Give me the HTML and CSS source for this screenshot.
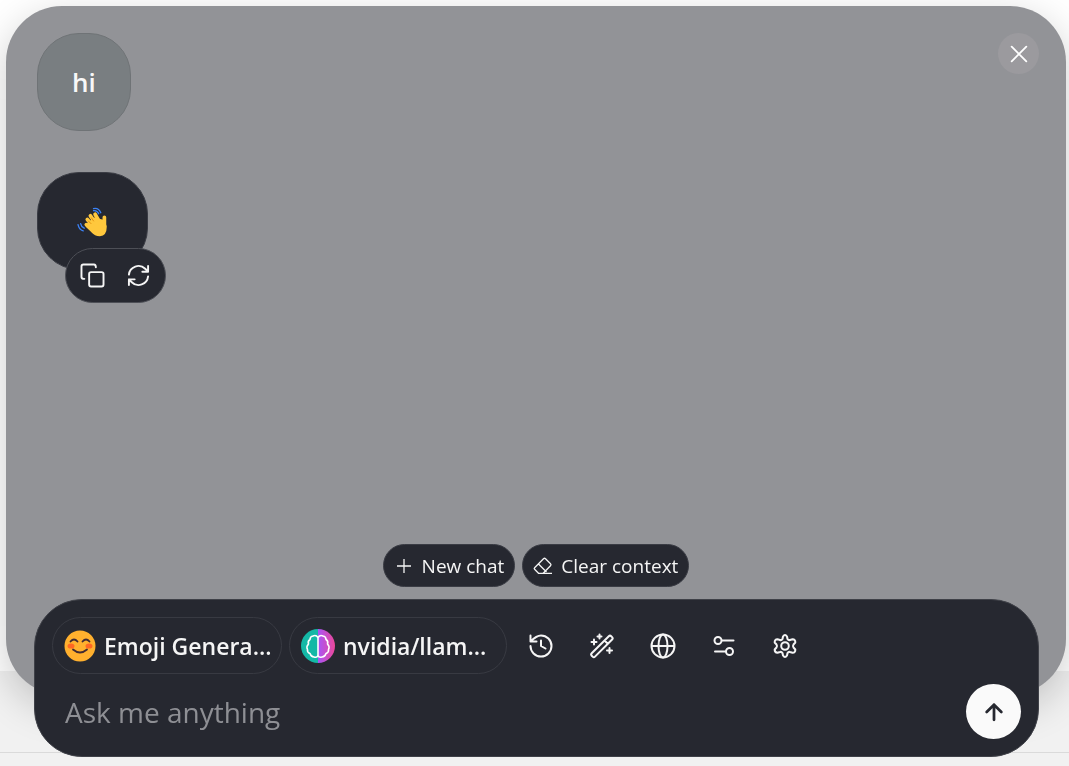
FILE: index.html
```html
<!DOCTYPE html>
<html lang="en">

<head>
    <meta charset="utf-8">
    <title>Chat</title>
    <meta name="viewport" content="width=device-width, initial-scale=1.0">
    <link rel="stylesheet" href="styles.css">
</head>

<body>
    <div id="page-footer"></div>
    <div id="chat">
        <main id="panel">
            <div id="messages">
                <div class="message user">hi</div>
                <div class="message bot">
                    <svg class="wave" viewBox="0 0 30 30" role="img" aria-label="waving hand">
                        <g fill="none" stroke="#3b82f6" stroke-width="1.3" stroke-linecap="round">
                            <path d="M16 2.500Q21 1.500 23 6.500M16 4.500Q19.500 4 21 7.500M1 18Q2 23 6 24M3.500 17Q4 20 7 21.500" />
                        </g>
                        <g stroke="#ffc83d" stroke-width="3.600" stroke-linecap="round" stroke-linejoin="round" fill="#ffc83d">
                            <path d="M10 19L17 13L25 15L27 20Q27 27 22 27.500Q18 27.500 15 24Z" />
                            <path d="M15 23L9 18M16 20L10 13M19 18L13 9.500M22 16L17.500 8M26.500 19L26.500 11" />
                        </g>
                        <path d="M13.500 17L11 14.500M16 14.500L14 11.500" fill="none" stroke="#d67d00" stroke-width="0.700" stroke-linecap="round" />
                    </svg>
                    <div class="message-tools">
                        <button aria-label="Copy">
                            <svg class="icon" viewBox="0 0 24 24"><rect x="8.500" y="8.500" width="15" height="15" rx="2" /><path d="M3.500 15.500c-1.600 0-3-.9-3-2V2.500c0-1.100.9-2 2-2h11c1.100 0 2 .9 2 3" /></svg>
                        </button>
                        <button aria-label="Regenerate">
                            <svg class="icon" viewBox="0 0 24 24"><path d="M2 11a10 10 0 0 1 17-6l3 3M22 2v6h-6M22 13a10 10 0 0 1-17 6l-3-3M2 22v-6h6" /></svg>
                        </button>
                    </div>
                </div>
            </div>
            <button id="close" aria-label="Close">
                <svg class="icon" viewBox="0 0 24 24"><path d="M4 4l16 16M20 4L4 20" /></svg>
            </button>
            <div id="actions">
                <button class="action">
                    <svg viewBox="0 0 20 20"><path d="M10 3v14M3 10h14" /></svg>
                    New chat
                </button>
                <button class="action">
                    <svg viewBox="0 0 20 20"><path d="M5.500 17.300L1.600 13.300Q.8 12.500 1.600 11.700L10.500 2.800Q11.500 1.800 12.500 2.800L17.500 7.800Q18.500 8.800 17.500 9.800L10.200 17.300ZM5.500 8L13.500 16M10 17.300H19" /></svg>
                    Clear context
                </button>
            </div>
        </main>

        <form id="composer">
            <div id="tools">
                <button type="button" class="picker">
                    <svg class="face" viewBox="0 0 32 32">
                        <circle cx="16" cy="16" r="15.500" fill="#ffb02e" />
                        <ellipse cx="7" cy="16" rx="3.500" ry="2.600" fill="#ff6723" />
                        <ellipse cx="25" cy="16" rx="3.500" ry="2.600" fill="#ff6723" />
                        <path d="M6.500 11.500Q10 7.500 13.500 11.500M18.500 11.500Q22 7.500 25.500 11.500M9 19.500Q16 25.500 23 19.500" fill="none" stroke="#402a32" stroke-width="1.800" stroke-linecap="round" />
                    </svg>
                    <span>Emoji Genera...</span>
                </button>
                <button type="button" class="picker model">
                    <svg class="brain" viewBox="0 0 34 34">
                        <defs>
                            <linearGradient id="pink"><stop offset="0" stop-color="#a855f7" /><stop offset="1" stop-color="#ec4899" /></linearGradient>
                        </defs>
                        <path d="M17 0a17 17 0 0 0 0 34z" fill="#14b8a6" />
                        <path d="M17 0a17 17 0 0 1 0 34z" fill="url(#pink)" />
                        <g fill="none" stroke="#fff" stroke-width="1.600" stroke-linejoin="round">
                            <path d="M17 8.500Q15 5.500 12 7Q9 7.500 9 10.500Q6.500 12 7.500 15Q5 17.500 6.500 20.500Q6 23.500 9 24.500Q10 28 13 28Q16 29 17 26.500Z" />
                            <path d="M17 8.500Q19 5.500 22 7Q25 7.500 25 10.500Q27.500 12 26.500 15Q29 17.500 27.500 20.500Q28 23.500 25 24.500Q24 28 21 28Q18 29 17 26.500" />
                        </g>
                    </svg>
                    <span>nvidia/llam...</span>
                </button>
                <button type="button" class="tool" aria-label="History">
                    <svg class="icon" viewBox="0 0 24 24"><path d="M1.500 12a10.500 10.500 0 1 0 10.500-10.500C8 1.500 5 4 1.500 7.500M1.500 1.500v6h6M12 6.500V12l4.500 2.500" /></svg>
                </button>
                <button type="button" class="tool" aria-label="Prompts">
                    <svg class="icon" viewBox="0 0 24 24"><path d="M1.700 19.300L18.800 2.200a1.700 1.700 0 0 1 2.400 0l.9.900a1.700 1.700 0 0 1 0 2.400L5 22.600a1.700 1.700 0 0 1-2.400 0l-.9-.9a1.700 1.700 0 0 1 0-2.400zM14.500 6.500l3.300 3.300M4 5.500v5M1.500 8h5M9.500.5v4M7.500 2.500h4M19.500 14v5M17 16.500h5" /></svg>
                </button>
                <button type="button" class="tool" aria-label="Web search">
                    <svg class="icon" viewBox="0 0 24 24"><circle cx="12" cy="12" r="11.500" /><ellipse cx="12" cy="12" rx="4.500" ry="11.500" /><path d="M1 12h22" /></svg>
                </button>
                <button type="button" class="tool" aria-label="Options">
                    <svg class="icon" viewBox="0 0 24 24"><circle cx="6" cy="6.500" r="3.500" /><circle cx="17.500" cy="17.500" r="3.500" /><path d="M10 6.500h11.500M3 17.500h10.500" /></svg>
                </button>
                <button type="button" class="tool" aria-label="Settings">
                    <svg class="icon" viewBox="0 0 24 24"><circle cx="12" cy="12" r="3.800" /><path d="M10 2.500Q12-.5 14 2.500L14.500 5Q15.500 6.500 17 6L19.500 5.300Q22.500 5.500 22.300 8.500L20.500 10.500Q19.500 12 20.500 13.500L22.300 15.500Q22.500 18.500 19.500 18.700L17 18Q15.500 17.500 14.500 19L14 21.500Q12 24.500 10 21.500L9.500 19Q8.500 17.500 7 18L4.500 18.700Q1.500 18.500 1.700 15.500L3.500 13.500Q4.500 12 3.500 10.500L1.700 8.500Q1.500 5.500 4.500 5.300L7 6Q8.500 6.500 9.500 5Z" /></svg>
                </button>
            </div>
            <div id="input-row">
                <input type="text" placeholder="Ask me anything" aria-label="Message">
                <button type="button" id="send" aria-label="Send">
                    <svg viewBox="0 0 24 24"><path d="M12 20.500V4M4 12l8-8 8 8" /></svg>
                </button>
            </div>
        </form>
    </div>
</body>

</html>
```
FILE: styles.css
```css
* {
    box-sizing: border-box;
}

body {
    margin: 0;
    height: 100vh;
    overflow: hidden;
    background-color: white;
    font-family: "Segoe UI", "Open Sans", "Noto Sans", sans-serif;
}

button {
    display: flex;
    align-items: center;
    justify-content: center;
    margin: 0;
    padding: 0;
    border: none;
    background: none;
    color: #f5f5f5;
    font-family: inherit;
    cursor: pointer;
}

svg {
    flex: none;
    display: block;
    overflow: visible;
}

.icon {
    width: 24px;
    height: 24px;
    fill: none;
    stroke: currentColor;
    stroke-width: 2;
    stroke-linecap: round;
    stroke-linejoin: round;
}

/* strip of the page behind the chat */
#page-footer {
    position: fixed;
    left: 0;
    right: 0;
    bottom: 0;
    height: 95px;
    background: linear-gradient(#f1f1f1 81px, #dadada 81px, #dadada 82px, #f1f1f1 82px);
}

#chat {
    position: relative;
    display: flex;
    flex-direction: column;
    height: 100vh;
    padding: 6px 3px 9px 6px;
}

#panel {
    position: relative;
    flex: 1;
    display: flex;
    flex-direction: column;
    justify-content: space-between;
    margin-bottom: -96px;
    padding: 27px 31px 108px;
    border-radius: 56px;
    background-color: #929397;
    box-shadow: 0 12px 40px #00000033;
}

#messages {
    display: flex;
    flex-direction: column;
    align-items: flex-start;
    gap: 41px;
}

.message {
    position: relative;
    display: flex;
    align-items: center;
    height: 98px;
    padding: 0 34px;
    border: 1px solid #6f7376;
    border-radius: 42px;
    color: #f8f8f8;
    font-size: 26px;
    font-weight: 600;
}

.message.user {
    background-color: #797e81;
}

.message.bot {
    padding: 0 39px;
    border-color: #3a3c44;
    background-color: #262830;
}

.wave {
    width: 31px;
    height: 31px;
}

.message-tools {
    position: absolute;
    top: 75px;
    left: 27px;
    display: flex;
    gap: 23px;
    padding: 14px 15px;
    border: 1px solid #4d4f56;
    border-radius: 28px;
    background-color: #262830;
}

.message-tools .icon {
    width: 23px;
    height: 25px;
}

#close {
    position: absolute;
    top: 27px;
    right: 27px;
    width: 41px;
    height: 41px;
    border-radius: 50%;
    background-color: #9b9a9e;
    color: white;
}

#close .icon {
    width: 22px;
    height: 22px;
}

#actions {
    display: flex;
    justify-content: center;
    gap: 7px;
}

.action {
    gap: 8px;
    height: 43px;
    padding: 0 10px;
    border: 1px solid #3a3c44;
    border-radius: 22px;
    background-color: #262830;
    font-size: 19px;
    font-weight: 500;
    white-space: nowrap;
}

.action svg {
    width: 20px;
    height: 20px;
    fill: none;
    stroke: currentColor;
    stroke-width: 1.3;
    stroke-linejoin: round;
}

#composer {
    position: relative;
    display: flex;
    flex-direction: column;
    gap: 10px;
    margin: 0 27px 0 28px;
    padding: 17px;
    border: 1px solid #3f4148;
    border-radius: 48px;
    background-color: #262830;
}

#tools {
    display: flex;
    align-items: center;
    gap: 7px;
}

.picker {
    justify-content: flex-start;
    gap: 8px;
    width: 230px;
    height: 57px;
    padding: 0 11px;
    border: 1px solid #383a42;
    border-radius: 29px;
    font-size: 23px;
    font-weight: 600;
    white-space: nowrap;
}

.picker.model {
    width: 218px;
}

.face {
    width: 32px;
    height: 32px;
}

.brain {
    width: 34px;
    height: 34px;
}

.tool {
    width: 54px;
    height: 54px;
}

#input-row {
    display: flex;
    align-items: center;
}

#input-row input {
    flex: 1;
    min-width: 0;
    padding: 0 13px;
    border: none;
    outline: none;
    background: none;
    color: #f5f5f5;
    font-family: inherit;
    font-size: 28px;
}

#input-row input::placeholder {
    color: #8e8f94;
}

#send {
    width: 55px;
    height: 55px;
    border-radius: 50%;
    background-color: #fafafa;
    color: #262830;
}

#send svg {
    width: 22px;
    height: 22px;
    fill: none;
    stroke: currentColor;
    stroke-width: 3;
    stroke-linecap: round;
    stroke-linejoin: round;
}
```
